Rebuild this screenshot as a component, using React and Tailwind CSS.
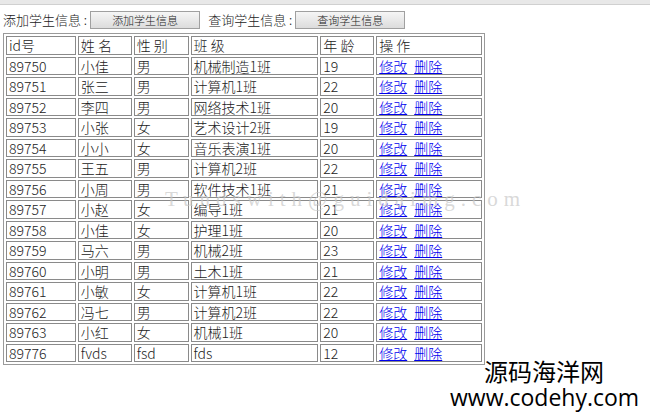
const rows = [
["89750","小佳","男","机械制造1班","19"],
["89751","张三","男","计算机1班","22"],
["89752","李四","男","网络技术1班","20"],
["89753","小张","女","艺术设计2班","19"],
["89754","小小","女","音乐表演1班","20"],
["89755","王五","男","计算机2班","22"],
["89756","小周","男","软件技术1班","21"],
["89757","小赵","女","编导1班","21"],
["89758","小佳","女","护理1班","20"],
["89759","马六","男","机械2班","23"],
["89760","小明","男","土木1班","21"],
["89761","小敏","女","计算机1班","22"],
["89762","冯七","男","计算机2班","22"],
["89763","小红","女","机械1班","20"],
["89776","fvds","fsd","fds","12"],
];
const widths = ["w-[70px]","w-[54px]","w-[55px]","w-[128px]","w-[54px]","w-[106px]"];
const td = "border border-[#8a8a8a] px-[2px] h-[18.5px] p-0 leading-[16px] text-left font-light align-middle whitespace-nowrap";
export default function App() {
  return (
    <div className="relative w-[650px] h-[415px] bg-white overflow-hidden text-[14px] text-[#222]" style={{fontFamily:'"Noto Sans CJK SC", "Noto Sans", sans-serif'}}>
      <div className="h-[5px] bg-[#e8e8e8] border-b border-[#d0d0d0]"></div>
      <div className="flex items-center h-[24px] mt-[3px] pl-[3px] font-light">
        <span className="text-[13px]">添加学生信息 :</span>
        <button className="ml-[3px] w-[110px] h-[18px] text-[11px] border border-[#a0a0a0] bg-gradient-to-b from-[#f6f6f6] to-[#dcdcdc] leading-none">添加学生信息</button>
        <span className="ml-[8px] text-[13px]">查询学生信息 :</span>
        <button className="ml-[3px] w-[110px] h-[18px] text-[11px] border border-[#a0a0a0] bg-gradient-to-b from-[#f6f6f6] to-[#dcdcdc] leading-none">查询学生信息</button>
      </div>
      <table className="ml-[3px] mt-[1px] border border-[#9a9a9a] border-separate border-spacing-[2px] w-[482px]">
        <thead>
          <tr>
            {["id号","姓 名","性 别","班 级","年 龄","操 作"].map((h,i)=>(
              <th key={i} className={td+" "+widths[i]}>{h}</th>
            ))}
          </tr>
        </thead>
        <tbody>
          {rows.map((r,i)=>(
            <tr key={i}>
              {r.map((c,j)=><td key={j} className={td}>{c}</td>)}
              <td className={td}><a className="text-[#0000ee] underline">修改</a><a className="ml-[7px] text-[#0000ee] underline">删除</a></td>
            </tr>
          ))}
        </tbody>
      </table>
      <div className="absolute left-[165px] top-[184px] text-[21px] tracking-[6px] text-[#c8c8c8]/70 pointer-events-none" style={{fontFamily:'"Liberation Serif", serif'}}>Tundswith@guidaimg.com</div>
      <div className="absolute left-[484px] top-[357px] text-[24px] leading-[28px] text-black">源码海洋网</div>
      <div className="absolute left-[450px] top-[383px] text-[23px] leading-[28px] text-black" style={{fontFamily:'"Open Sans", sans-serif'}}>www.codehy.com</div>
    </div>
  );
}
